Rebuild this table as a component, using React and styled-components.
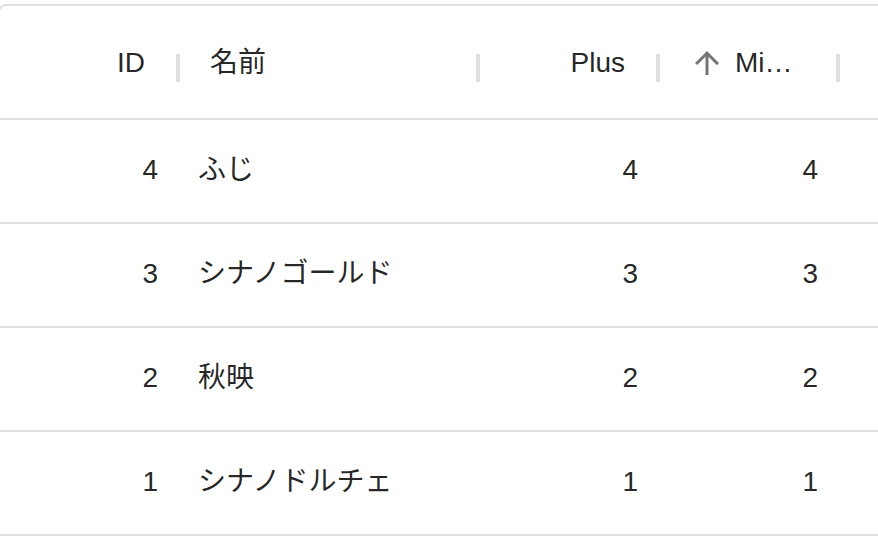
import React from 'react';
import styled, { createGlobalStyle } from 'styled-components';

const rows = [
  { id: 4, name: 'ふじ', plus: 4, minus: 4 },
  { id: 3, name: 'シナノゴールド', plus: 3, minus: 3 },
  { id: 2, name: '秋映', plus: 2, minus: 2 },
  { id: 1, name: 'シナノドルチェ', plus: 1, minus: 1 },
];

const columns = [
  { key: 'id', title: 'ID', align: 'right', trail: 13 },
  { key: 'name', title: '名前', align: 'left', lead: 12 },
  { key: 'plus', title: 'Plus', align: 'right', trail: 13 },
  { key: 'minus', title: 'Minus', align: 'right', trail: 23, sorted: true, clip: 60 },
];

const GlobalStyle = createGlobalStyle`
  html, body {
    margin: 0;
    background: #fff;
    overflow: hidden;
  }
  body {
    font-family: "Liberation Sans", Arial, "Noto Sans CJK JP", sans-serif;
    color: rgba(0, 0, 0, 0.87);
  }
`;

const Page = styled.div`
  padding-top: 4px;
`;

const Grid = styled.div`
  width: 940px;
  min-height: 600px;
  margin-left: -2px;
  border: 2px solid #e0e0e0;
  border-radius: 8px;
  font-size: 28px;
  line-height: 1.43;
`;

const Row = styled.div`
  display: grid;
  grid-template-columns: 178px 300px 180px 180px 1fr;
  height: ${(p) => (p.$header ? 112 : 102)}px;
  border-bottom: 2px solid #e0e0e0;
`;

const HeaderCell = styled.div`
  position: relative;
  display: flex;
  align-items: center;
  justify-content: ${(p) => (p.$align === 'right' ? 'flex-end' : 'flex-start')};
  padding: 2px ${(p) => 20 + (p.$trail || 0)}px 0 ${(p) => 20 + (p.$lead || 0)}px;
  min-width: 0;
`;

const Title = styled.span`
  white-space: nowrap;
  overflow: hidden;
  text-overflow: ellipsis;
  ${(p) => (p.$clip ? `width: ${p.$clip}px;` : '')}
`;

const SortIcon = styled.svg`
  width: 36px;
  height: 36px;
  margin-right: 10px;
  flex-shrink: 0;
  fill: rgba(0, 0, 0, 0.54);
`;

const Separator = styled.span`
  position: absolute;
  right: -2px;
  top: 48px;
  width: 4px;
  height: 28px;
  background: #e0e0e0;
`;

const Cell = styled.div`
  display: flex;
  align-items: center;
  justify-content: ${(p) => (p.$align === 'right' ? 'flex-end' : 'flex-start')};
  padding: 0 20px 2px;
  white-space: nowrap;
  overflow: hidden;
`;

const ArrowUp = () => (
  <SortIcon viewBox="0 0 24 24">
    <path d="M4 12l1.41 1.41L11 7.83V20h2V7.83l5.58 5.59L20 12l-8-8-8 8z" />
  </SortIcon>
);

export default function App() {
  return (
    <Page>
      <GlobalStyle />
      <Grid>
        <Row $header>
          {columns.map((c) => (
            <HeaderCell key={c.key} $align={c.align} $trail={c.trail} $lead={c.lead}>
              {c.sorted && <ArrowUp />}
              <Title $clip={c.clip}>{c.title}</Title>
              <Separator />
            </HeaderCell>
          ))}
          <div />
        </Row>
        {rows.map((r) => (
          <Row key={r.id}>
            {columns.map((c) => (
              <Cell key={c.key} $align={c.align}>
                {r[c.key]}
              </Cell>
            ))}
            <div />
          </Row>
        ))}
      </Grid>
    </Page>
  );
}
